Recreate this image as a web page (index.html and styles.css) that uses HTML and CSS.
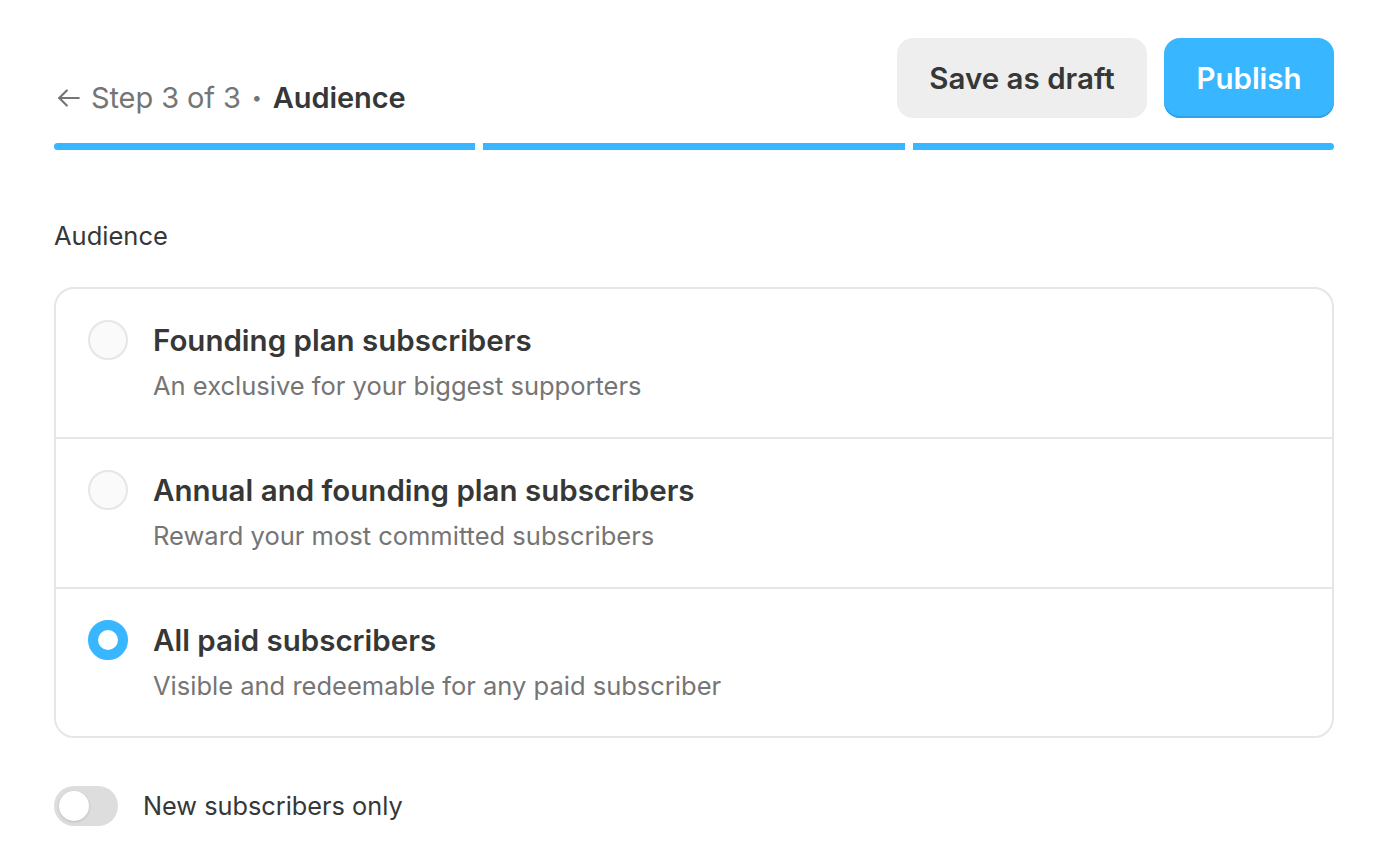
FILE: index.html
```html
<!DOCTYPE html>
<html lang="en">
<head>
    <meta charset="UTF-8">
    <meta name="viewport" content="width=device-width, initial-scale=1.0">
    <title>Audience</title>
    <link rel="stylesheet" href="styles.css">
</head>
<body>
    <div class="page">
        <div class="topbar">
            <div class="step">
                <svg class="back-arrow" width="26" height="26" viewBox="0 0 24 24" fill="none" stroke="currentColor" stroke-width="2" stroke-linecap="round" stroke-linejoin="round">
                    <path d="M21 12H3"/>
                    <path d="M10 5l-7 7 7 7"/>
                </svg>
                <span class="step-count">Step 3 of 3</span>
                <span class="step-dot">•</span>
                <span class="step-name">Audience</span>
            </div>
            <div class="actions">
                <button class="btn btn-draft">Save as draft</button>
                <button class="btn btn-publish">Publish</button>
            </div>
        </div>

        <div class="progress">
            <div class="progress-part"></div>
            <div class="progress-part"></div>
            <div class="progress-part"></div>
        </div>

        <div class="field-label">Audience</div>

        <div class="options">
            <label class="option">
                <span class="radio"></span>
                <span class="option-text">
                    <span class="option-title">Founding plan subscribers</span>
                    <span class="option-desc">An exclusive for your biggest supporters</span>
                </span>
            </label>
            <label class="option">
                <span class="radio"></span>
                <span class="option-text">
                    <span class="option-title">Annual and founding plan subscribers</span>
                    <span class="option-desc">Reward your most committed subscribers</span>
                </span>
            </label>
            <label class="option">
                <span class="radio checked"></span>
                <span class="option-text">
                    <span class="option-title">All paid subscribers</span>
                    <span class="option-desc">Visible and redeemable for any paid subscriber</span>
                </span>
            </label>
        </div>

        <div class="toggle-row">
            <span class="toggle"><span class="toggle-knob"></span></span>
            <span class="toggle-label">New subscribers only</span>
        </div>
    </div>
</body>
</html>
```

FILE: styles.css
```css
body {
    margin: 0;
    font-family: Inter, "Noto Sans", sans-serif;
    background-color: #ffffff;
    color: #363737;
}
.page {
    padding: 38px 52px 0 54px;
}
.topbar {
    display: flex;
    justify-content: space-between;
    align-items: flex-end;
}
.step {
    display: flex;
    align-items: center;
    height: 40px;
    font-size: 29px;
    line-height: 40px;
    letter-spacing: -0.1px;
}
.back-arrow {
    color: #757575;
    margin: 0 9px 0 2px;
}
.step-count {
    color: #757575;
}
.step-dot {
    color: #757575;
    font-size: 18px;
    margin: 0 11px 0 11px;
}
.step-name {
    font-weight: 600;
    color: #363737;
}
.actions {
    display: flex;
    gap: 17px;
}
.btn {
    height: 80px;
    border: none;
    border-radius: 16px;
    font-family: inherit;
    font-size: 29.5px;
    font-weight: 600;
    cursor: pointer;
}
.btn-draft {
    width: 250px;
    background-color: #eeeeee;
    color: #363737;
}
.btn-publish {
    width: 170px;
    background-color: #38b6ff;
    color: #ffffff;
    box-shadow: inset 0 -2px 0 #2ea3e8;
}
.progress {
    display: flex;
    gap: 8px;
    margin-top: 25px;
    height: 7px;
    border-radius: 4px;
    overflow: hidden;
}
.progress-part {
    flex: 1;
    background-color: #38b6ff;
}
.field-label {
    margin-top: 71px;
    font-size: 25.5px;
    line-height: 30px;
    color: #363737;
}
.options {
    margin-top: 36px;
    border: 2px solid #e6e6e6;
    border-radius: 20px;
}
.option {
    display: flex;
    align-items: flex-start;
    gap: 25px;
    height: 150px;
    box-sizing: border-box;
    padding: 33px 32px 0;
    border-bottom: 2px solid #e6e6e6;
    cursor: pointer;
}
.option:last-child {
    height: 147px;
    border-bottom: none;
}
.radio {
    flex: none;
    width: 40px;
    height: 40px;
    margin-top: -2px;
    box-sizing: border-box;
    border: 2px solid #e6e6e6;
    border-radius: 50%;
    background-color: #fafafa;
}
.radio.checked {
    border: 10px solid #38b6ff;
    background-color: #ffffff;
}
.option-text {
    display: flex;
    flex-direction: column;
    gap: 12px;
}
.option-title {
    font-size: 29.5px;
    line-height: 36px;
    font-weight: 600;
    color: #363737;
}
.option-desc {
    font-size: 25.5px;
    line-height: 32px;
    color: #757575;
}
.toggle-row {
    display: flex;
    align-items: center;
    gap: 25px;
    margin-top: 48px;
}
.toggle {
    display: flex;
    align-items: center;
    width: 64px;
    height: 40px;
    box-sizing: border-box;
    padding: 0 5px;
    border-radius: 20px;
    background-color: #dddddd;
}
.toggle-knob {
    width: 30px;
    height: 30px;
    border-radius: 50%;
    background-color: #ffffff;
    box-shadow: 0 1px 3px rgba(0, 0, 0, 0.15);
}
.toggle-label {
    font-size: 25.3px;
    line-height: 30px;
    color: #363737;
}
```
